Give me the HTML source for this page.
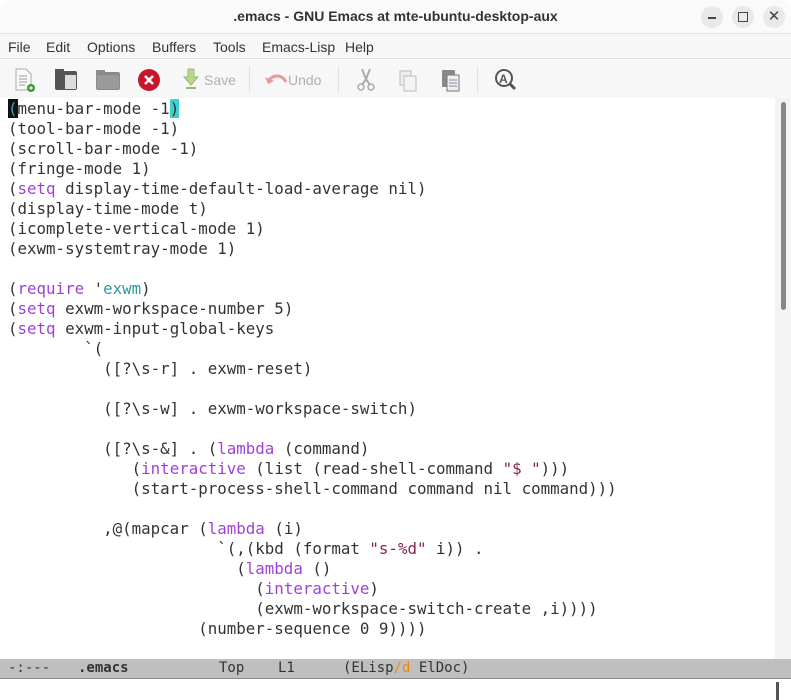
<!DOCTYPE html>
<html><head><meta charset="utf-8"><style>
*{margin:0;padding:0;box-sizing:border-box}
body{width:791px;height:700px;overflow:hidden;background:#fff;font-family:"Liberation Sans",sans-serif;position:relative}
#title{position:absolute;left:0;top:0;width:791px;height:34px;background:#fafafa;border-bottom:1px solid #e4e4e4;border-radius:10px 10px 0 0}
#title .t{position:absolute;left:0;right:0;top:8px;text-align:center;font-size:14px;font-weight:bold;color:#333}
.wb{position:absolute;top:6px;width:22px;height:22px;border-radius:50%;background:#e9e9e9}
#menu{position:absolute;top:34px;left:0;width:791px;height:25px;background:#f7f7f7;border-bottom:1px solid #e2e2e2;font-size:14px;color:#333}
#menu span{position:absolute;top:5px}
#tool{position:absolute;top:60px;left:0;width:791px;height:38px;background:#f7f7f7}
.sep{position:absolute;top:6px;width:1px;height:26px;background:#e0e0e0}
#buf{position:absolute;top:99px;left:0;width:775px;height:560px;font-family:"DejaVu Sans Mono","Liberation Mono",monospace;font-size:15.8px;line-height:20px;color:#333;white-space:pre;padding-left:8px}
.k{color:#a040d8}.c{color:#2f9aa0}.s{color:#8b2252}
#sb{position:absolute;left:775px;top:98px;width:16px;height:561px;background:#f4f4f4}
#thumb{position:absolute;left:781px;top:102px;width:5px;height:208px;background:#888;border-radius:3px}
#ml{position:absolute;top:659px;left:0;width:791px;height:20px;background:#bfbfbf;border-bottom:1px solid #888;font-family:"DejaVu Sans Mono",monospace;font-size:14px;line-height:19px;color:#333;white-space:pre}
#ml span{position:absolute;top:0}
#mini{position:absolute;top:679px;left:0;width:791px;height:21px;background:#fff}
</style></head><body>
<div id="title"><div class="t">.emacs - GNU Emacs at mte-ubuntu-desktop-aux</div>
<div class="wb" style="left:701px"><div style="position:absolute;left:7px;top:11px;width:8px;height:1.5px;background:#444"></div></div>
<div class="wb" style="left:732px"><div style="position:absolute;left:6px;top:6px;width:10px;height:10px;border:1.5px solid #444"></div></div>
<div class="wb" style="left:763px;text-align:center;font-size:15px;line-height:22px;color:#444">✕</div>
</div>
<div id="menu"><span style="left:8px">File</span><span style="left:46px">Edit</span><span style="left:87px">Options</span><span style="left:152px">Buffers</span><span style="left:213px">Tools</span><span style="left:262px">Emacs-Lisp</span><span style="left:345px">Help</span></div>
<div id="tool">
<svg width="791" height="38" style="position:absolute;left:0;top:0">
<path d="M16 9h10l5 5v16h-15z" fill="#fafafa" stroke="#aaa"/><path d="M19 16h8M19 19h8M19 22h8M19 25h6" stroke="#999"/><circle cx="31" cy="28" r="4" fill="#3a9a3a"/><path d="M29 28h4M31 26v4" stroke="#fff"/>
<rect x="55" y="11" width="22" height="19" rx="2" fill="#555"/><rect x="55" y="9" width="9" height="4" fill="#555"/><rect x="65" y="15" width="11" height="14" fill="#ddd"/>
<rect x="96" y="12" width="24" height="18" rx="2" fill="#8a8a8a"/><rect x="96" y="10" width="9" height="4" fill="#8a8a8a"/><rect x="97" y="15" width="22" height="14" fill="#9a9a9a"/>
<circle cx="149" cy="20" r="11" fill="#c7162b"/><path d="M145 16l8 8M153 16l-8 8" stroke="#fff" stroke-width="2.5"/>
<path d="M188 9h6v8h4l-7 8-7-8h4z" fill="#b8d88a" stroke="#9ab86a"/><path d="M186 28h10" stroke="#9ab86a" stroke-width="2"/>
<path d="M268 22c4-8 14-8 18 0" fill="none" stroke="#e89a9a" stroke-width="3"/><path d="M265 17l3 7 6-3z" fill="#e89a9a"/>
<path d="M362 9l4 10 4-10M366 19l-4 6M366 19l4 6" stroke="#aaa" stroke-width="2" fill="none"/><circle cx="361" cy="27" r="3" fill="none" stroke="#aaa" stroke-width="1.5"/><circle cx="371" cy="27" r="3" fill="none" stroke="#aaa" stroke-width="1.5"/>
<rect x="400" y="11" width="11" height="14" fill="#eee" stroke="#bbb"/><rect x="404" y="16" width="12" height="15" fill="#f4f4f4" stroke="#bbb"/>
<rect x="442" y="10" width="13" height="17" rx="1" fill="#888"/><rect x="447" y="15" width="12" height="16" fill="#eee" stroke="#777"/><path d="M449 20h8M449 23h8M449 26h8" stroke="#88a"/>
<circle cx="504" cy="18" r="8" fill="none" stroke="#555" stroke-width="2"/><path d="M510 24l5 5" stroke="#555" stroke-width="3"/><text x="499" y="23" font-size="12" font-weight="bold" fill="#555" font-family="Liberation Sans">A</text>
<text x="204" y="25" font-size="14" fill="#b0b0b0" font-family="Liberation Sans">Save</text>
<text x="288" y="25" font-size="14" fill="#b0b0b0" font-family="Liberation Sans">Undo</text>
</svg>
<div class="sep" style="left:249px"></div><div class="sep" style="left:338px"></div><div class="sep" style="left:477px"></div>
</div>
<div id="buf"><span style="background:#111;color:#3ab">(</span>menu-bar-mode -1<span style="background:#40d0d0">)</span>
(tool-bar-mode -1)
(scroll-bar-mode -1)
(fringe-mode 1)
(<span class="k">setq</span> display-time-default-load-average nil)
(display-time-mode t)
(icomplete-vertical-mode 1)
(exwm-systemtray-mode 1)

(<span class="k">require</span> '<span class="c">exwm</span>)
(<span class="k">setq</span> exwm-workspace-number 5)
(<span class="k">setq</span> exwm-input-global-keys
        `(
          ([?\s-r] . exwm-reset)

          ([?\s-w] . exwm-workspace-switch)

          ([?\s-&amp;] . (<span class="k">lambda</span> (command)
             (<span class="k">interactive</span> (list (read-shell-command <span class="s">"$ "</span>)))
             (start-process-shell-command command nil command)))

          ,@(mapcar (<span class="k">lambda</span> (i)
                      `(,(kbd (format <span class="s">"s-%d"</span> i)) .
                        (<span class="k">lambda</span> ()
                          (<span class="k">interactive</span>)
                          (exwm-workspace-switch-create ,i))))
                    (number-sequence 0 9))))</div>
<div id="sb"></div><div id="thumb"></div>
<div id="ml"><span style="left:8px">-:---</span><span style="left:78px;font-weight:bold">.emacs</span><span style="left:219px">Top</span><span style="left:278px">L1</span><span style="left:343px">(ELisp<span style="position:static;color:#f08a00">/d</span> ElDoc)</span></div>
<div id="mini"><div style="position:absolute;left:776px;top:3px;width:3px;height:18px;background:#555"></div></div>
</body></html>
